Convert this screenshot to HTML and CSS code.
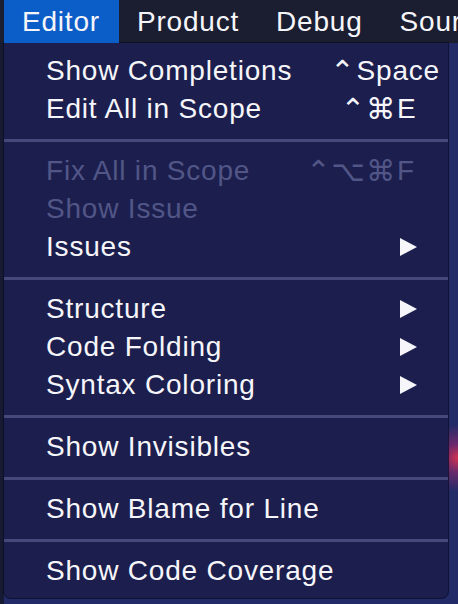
FILE: index.html
```html
<!DOCTYPE html>
<html>
<head>
<meta charset="utf-8">
<link rel="stylesheet" href="styles.css">
</head>
<body>
<div class="menubar">
  <span class="mb-item active">Editor</span>
  <span class="mb-item">Product</span>
  <span class="mb-item">Debug</span>
  <span class="mb-item">Source Control</span>
</div>
<div class="menu">
  <div class="row"><span class="label">Show Completions</span><span class="sc"><span class="mods">⌃</span><span class="key">Space</span></span></div>
  <div class="row"><span class="label">Edit All in Scope</span><span class="sc"><span class="mods">⌃⌘</span><span class="key">E</span></span></div>
  <div class="sep"></div>
  <div class="row disabled"><span class="label">Fix All in Scope</span><span class="sc"><span class="mods">⌃⌥⌘</span><span class="key">F</span></span></div>
  <div class="row disabled"><span class="label">Show Issue</span></div>
  <div class="row"><span class="label">Issues</span><span class="arrow"></span></div>
  <div class="sep"></div>
  <div class="row"><span class="label">Structure</span><span class="arrow"></span></div>
  <div class="row"><span class="label">Code Folding</span><span class="arrow"></span></div>
  <div class="row"><span class="label">Syntax Coloring</span><span class="arrow"></span></div>
  <div class="sep"></div>
  <div class="row"><span class="label">Show Invisibles</span></div>
  <div class="sep"></div>
  <div class="row"><span class="label">Show Blame for Line</span></div>
  <div class="sep"></div>
  <div class="row"><span class="label">Show Code Coverage</span></div>
</div>
</body>
</html>
```
FILE: styles.css
```css
html, body {
  margin: 0;
  padding: 0;
  height: 100%;
  overflow: hidden;
}
body {
  width: 458px;
  height: 604px;
  font-family: "Liberation Sans", Arial, "DejaVu Sans", sans-serif;
  font-size: 28px;
  letter-spacing: 0.8px;
  color: #f6f6fa;
  background:
    radial-gradient(circle at 458px 458px, rgba(230, 50, 80, 0.9) 0, rgba(180, 40, 110, 0.5) 14px, rgba(60, 40, 120, 0) 34px),
    linear-gradient(to right, #171a33 0, #171a33 4px, #222a68 4px);
}
.menubar {
  height: 43px;
  background: #1b1d31;
  display: flex;
  padding-left: 4px;
  white-space: nowrap;
  overflow: hidden;
}
.mb-item {
  padding: 0 19px 0 18px;
  line-height: 43px;
  height: 43px;
}
.mb-item.active {
  background: #0b5dc8;
}
.menu {
  margin-left: 4px;
  width: 444px;
  padding: 9px 0 8px;
  background: #1c1f4e;
  border-radius: 0 0 7px 7px;
  box-shadow: 0 0 0 1px rgba(10, 10, 30, 0.7);
}
.row {
  height: 38px;
  display: flex;
  align-items: center;
  padding: 0 8px 0 42px;
  white-space: nowrap;
}
.label {
  flex: 1;
}
.disabled {
  color: #515687;
}
.sc {
  display: flex;
  align-items: center;
}
.mods {
  margin-right: 1px;
  font-family: "DejaVu Sans", sans-serif;
  font-size: 29px;
  letter-spacing: 1px;
  line-height: 1;
}
.key {
  min-width: 43px;
}
.arrow {
  width: 0;
  height: 0;
  border-top: 9px solid transparent;
  border-bottom: 9px solid transparent;
  border-left: 17px solid #f6f6fa;
  margin-right: 23px;
}
.sep {
  height: 3px;
  margin: 11px 0 10px;
  background: #45487b;
}
```
